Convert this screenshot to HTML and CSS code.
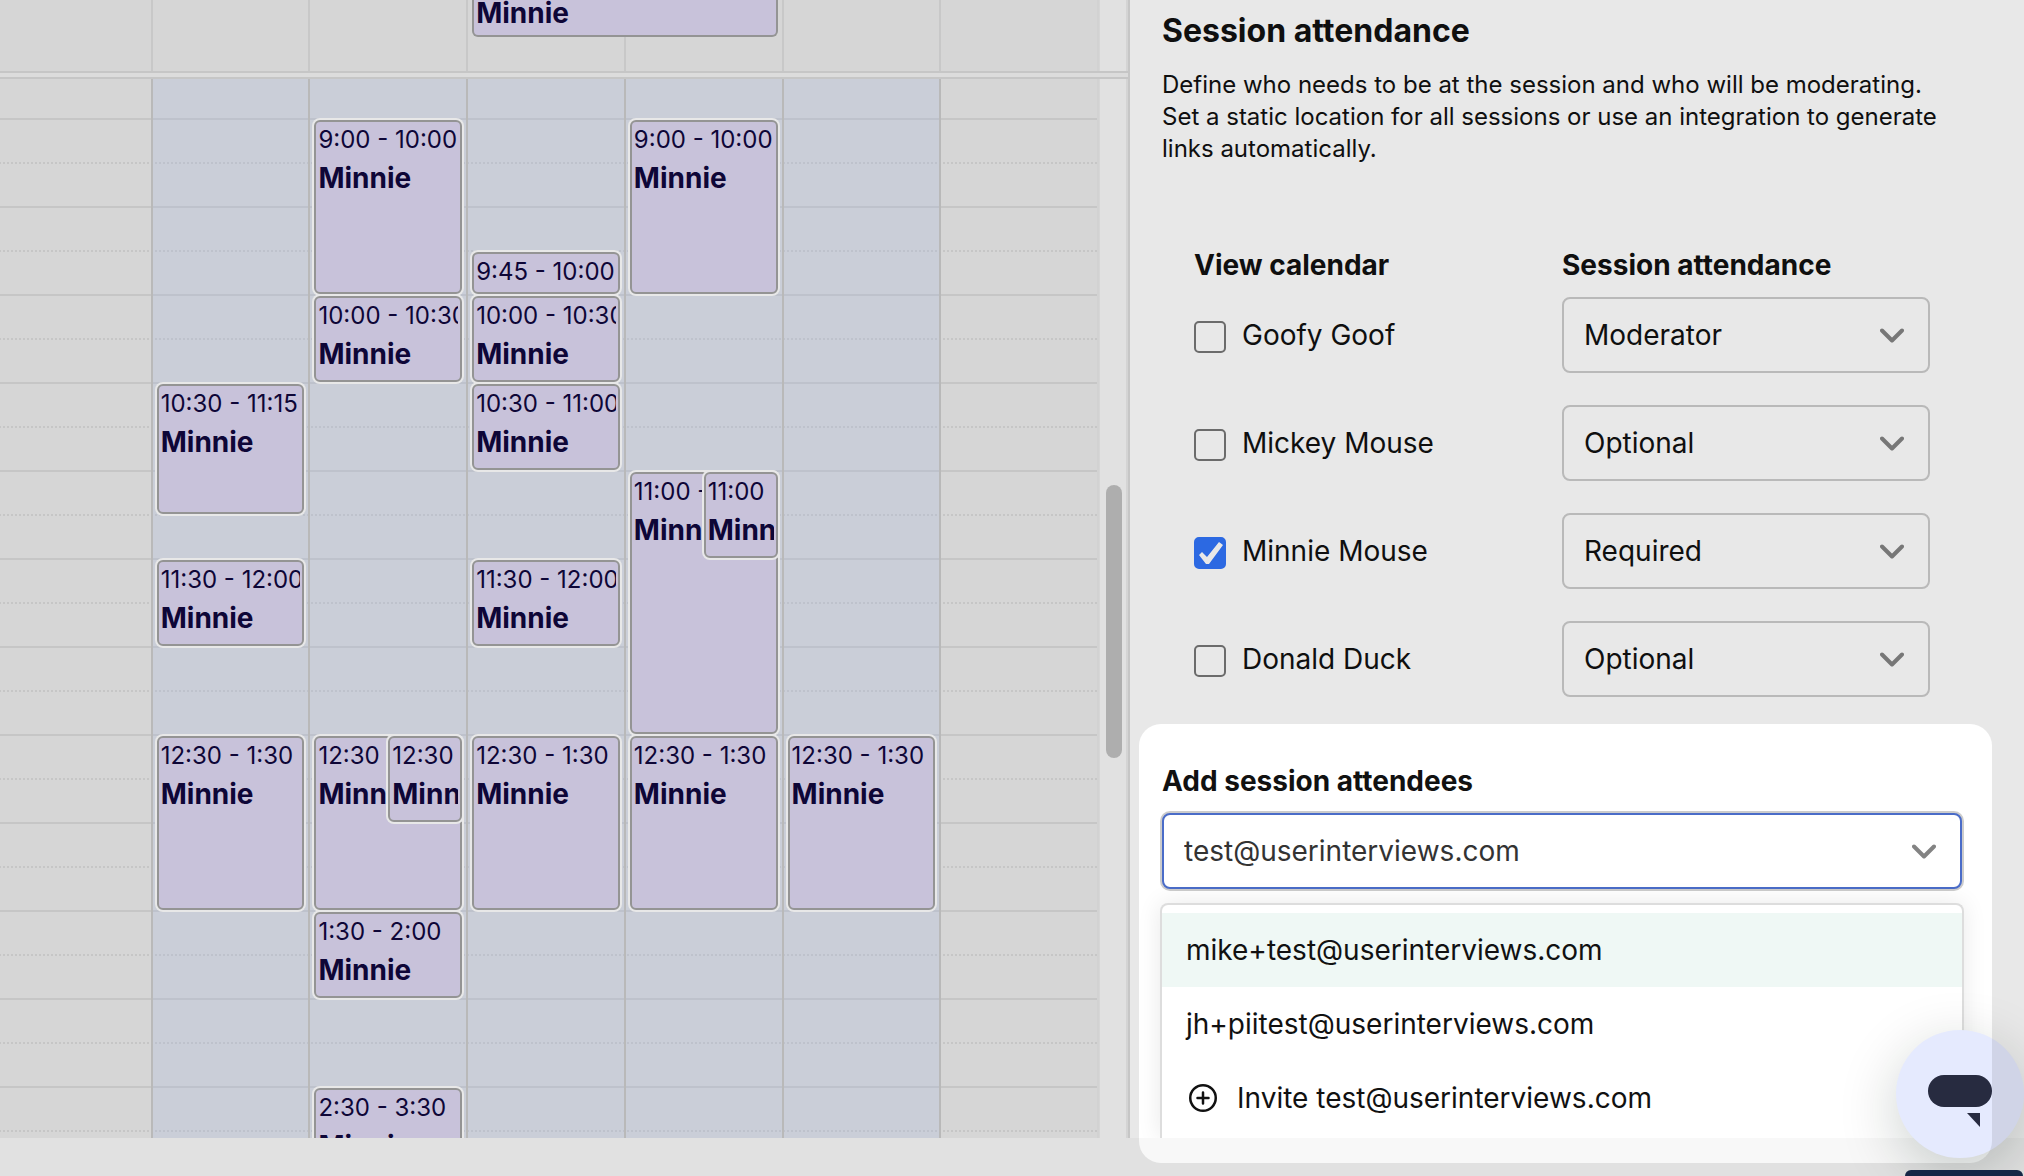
FILE: index.html
```html
<!DOCTYPE html>
<html lang="en">
<head>
    <meta charset="UTF-8">
    <meta name="viewport" content="width=device-width, initial-scale=1.0">
    <title>Session attendance</title>
    <link rel="stylesheet" href="styles.css">
</head>
<body>

    <main class="workspace">

        <!-- Week calendar -->
        <section class="calendar" aria-label="Calendar">
            <div class="all-day">
                <div class="week">
                    <div class="cell"></div>
                    <div class="cell"></div>
                    <div class="cell"></div>
                    <div class="cell"></div>
                    <div class="cell"></div>
                    <div class="cell"></div>
                    <div class="cell"></div>
                    <div class="event-layer">
                        <div class="event event-all-day"><div class="event-title">Minnie</div></div>
                    </div>
                </div>
                <div class="gutter"></div>
            </div>

            <div class="divider"></div>

            <div class="time-scroller">
                <div class="week slots" id="week"></div>
                <div class="gutter"><div class="thumb"></div></div>
            </div>
        </section>

        <!-- Session settings -->
        <section class="panel">
            <h2>Session attendance</h2>
            <p class="intro">Define who needs to be at the session and who will be moderating. Set a static location for all sessions or use an integration to generate links automatically.</p>

            <table class="people">
                <thead>
                    <tr><th>View calendar</th><th>Session attendance</th></tr>
                </thead>
                <tbody>
                    <tr>
                        <td><label class="person"><input type="checkbox">Goofy Goof</label></td>
                        <td>
                            <div class="select">
                                <select aria-label="Attendance for Goofy Goof">
                                    <option selected>Moderator</option><option>Required</option><option>Optional</option>
                                </select>
                                <svg class="chevron" viewBox="0 0 24 16"><path d="M2 2.500l10 10 10-10"/></svg>
                            </div>
                        </td>
                    </tr>
                    <tr>
                        <td><label class="person"><input type="checkbox">Mickey Mouse</label></td>
                        <td>
                            <div class="select">
                                <select aria-label="Attendance for Mickey Mouse">
                                    <option>Moderator</option><option>Required</option><option selected>Optional</option>
                                </select>
                                <svg class="chevron" viewBox="0 0 24 16"><path d="M2 2.500l10 10 10-10"/></svg>
                            </div>
                        </td>
                    </tr>
                    <tr>
                        <td><label class="person"><input type="checkbox" checked>Minnie Mouse</label></td>
                        <td>
                            <div class="select">
                                <select aria-label="Attendance for Minnie Mouse">
                                    <option>Moderator</option><option selected>Required</option><option>Optional</option>
                                </select>
                                <svg class="chevron" viewBox="0 0 24 16"><path d="M2 2.500l10 10 10-10"/></svg>
                            </div>
                        </td>
                    </tr>
                    <tr>
                        <td><label class="person"><input type="checkbox">Donald Duck</label></td>
                        <td>
                            <div class="select">
                                <select aria-label="Attendance for Donald Duck">
                                    <option>Moderator</option><option>Required</option><option selected>Optional</option>
                                </select>
                                <svg class="chevron" viewBox="0 0 24 16"><path d="M2 2.500l10 10 10-10"/></svg>
                            </div>
                        </td>
                    </tr>
                </tbody>
            </table>

            <div class="add-attendees">
                <label class="add-label" for="attendee">Add session attendees</label>
                <div class="combo">
                    <input type="text" id="attendee" value="test@userinterviews.com" autocomplete="off">
                    <svg class="chevron" viewBox="0 0 24 16"><path d="M2 2.500l10 10 10-10"/></svg>
                    <div class="menu">
                        <button type="button" class="active">mike+test@userinterviews.com</button>
                        <button type="button">jh+piitest@userinterviews.com</button>
                        <button type="button">
                            <svg class="plus" viewBox="0 0 28 28"><circle cx="14" cy="14" r="12.750"/><path d="M14 8.500v11M8.500 14h11"/></svg>
                            Invite test@userinterviews.com
                        </button>
                    </div>
                </div>
                <!-- Dims everything outside the highlighted field -->
                <div class="spotlight"></div>
            </div>
        </section>
    </main>

    <footer class="bottom-bar"></footer>

    <!-- Help chat -->
    <button type="button" class="chat" aria-label="Open chat">
        <svg viewBox="0 0 128 128">
            <rect x="32" y="45" width="64" height="32" rx="16"/>
            <path d="M71 83h13v14z"/>
        </svg>
    </button>
    <div class="toast"></div>

    <script>
        // The grid starts at 8:45, one row per 15 minutes
        const gridStart = 8 * 60 + 45;

        const days = [
            { open: false, events: [] },
            { open: true, events: [["10:30", "11:15"], ["11:30", "12:00"], ["12:30", "1:30"]] },
            { open: true, events: [["9:00", "10:00"], ["10:00", "10:30"], ["12:30", "1:30"], ["12:30", "1:00", "half"], ["1:30", "2:00"], ["2:30", "3:30"]] },
            { open: true, events: [["9:45", "10:00"], ["10:00", "10:30"], ["10:30", "11:00"], ["11:30", "12:00"], ["12:30", "1:30"]] },
            { open: true, events: [["9:00", "10:00"], ["11:00", "12:30"], ["11:00", "11:30", "half"], ["12:30", "1:30"]] },
            { open: true, events: [["12:30", "1:30"]] },
            { open: false, events: [] }
        ];

        function rowOf(time) {
            let [hours, minutes] = time.split(":").map(Number);
            if (hours < 8) hours += 12;
            return (hours * 60 + minutes - gridStart) / 15 + 1;
        }

        const week = document.getElementById("week");
        days.forEach(day => {
            const column = document.createElement("div");
            column.className = day.open ? "day open" : "day";
            day.events.forEach(([start, end, size]) => {
                const event = document.createElement("div");
                event.className = size ? "event " + size : "event";
                event.style.gridRow = `${rowOf(start)} / ${rowOf(end)}`;
                // A quarter-hour event only has room for its time
                const title = rowOf(end) - rowOf(start) > 1 ? '<div class="event-title">Minnie</div>' : "";
                event.innerHTML = `<div class="event-time">${start} - ${end}</div>${title}`;
                column.appendChild(event);
            });
            week.appendChild(column);
        });
    </script>
</body>
</html>
```
FILE: styles.css
```css
* {
    box-sizing: border-box;
}

body {
    font-family: Inter, "Liberation Sans", sans-serif;
    font-size: 28px;
    color: #111;
    background: #fff;
    margin: 0;
    height: 100vh;
    display: flex;
    flex-direction: column;
    position: relative;
    overflow: hidden;
}

input, select, button {
    font: inherit;
    color: inherit;
}

.workspace {
    flex: 1;
    min-height: 0;
    display: grid;
    grid-template-columns: minmax(0, 1fr) 894px;
}

/* Calendar */
.calendar {
    min-height: 0;
    display: flex;
    flex-direction: column;
    border-right: 2px solid #dadada;
    background: #ececec;
    overflow: hidden;
}

.all-day,
.time-scroller {
    display: grid;
    grid-template-columns: minmax(0, 1fr) 28px;
}

.time-scroller {
    flex: 1;
    min-height: 0;
    overflow: hidden;
}

.week {
    position: relative;
    display: grid;
    grid-template-columns: repeat(7, minmax(0, 1fr));
    margin: 0 1px 0 -5px;
}

.all-day .week {
    grid-template-rows: 71px;
}

.cell {
    border-right: 2px solid #dcdcdc;
}

.event-layer {
    position: absolute;
    inset: 0;
    display: grid;
    grid-template-columns: repeat(7, minmax(0, 1fr));
}

.divider {
    height: 8px;
    flex-shrink: 0;
    background: #f2f2f2;
    border-top: 2px solid #dadada;
    border-bottom: 2px solid #dadada;
}

.gutter {
    background: #f8f8f8;
    border-right: 2px solid #e9e9e9;
}

.thumb {
    width: 16px;
    height: 273px;
    margin: 406px 4px 0 auto;
    border-radius: 8px;
    background: #c0c0c0;
}

/* Solid line every half hour, dotted line every quarter */
.slots {
    margin-top: -5px;
    align-self: start;
    background-image:
        linear-gradient(transparent 2px, #ececec 2px, #ececec 44px, #dadada 44px, #dadada 46px, #ececec 46px),
        repeating-linear-gradient(90deg, #dadada 0, #dadada 2px, #ececec 2px, #ececec 4px);
    background-size: 100% 88px;
}

.day {
    display: grid;
    grid-template-columns: minmax(0, 1fr);
    grid-template-rows: repeat(25, 44px);
    padding: 0 4px;
    border-right: 2px solid #ccc;
}

.day.open {
    background: rgba(189, 206, 243, 0.3);
}

.day:last-child,
.cell:nth-child(7) {
    border-right-color: #e7e7e7;
}

/* Events */
.event {
    grid-column: 1;
    margin-top: 2px;
    padding: 0 2px;
    border: 2px solid #a3a3a3;
    border-radius: 6px;
    background: #dcd6f0;
    color: #10073d;
    box-shadow: 0 0 0 2px #fff;
    overflow: hidden;
    white-space: nowrap;
}

.event.half {
    margin-left: 50%;
}

.event-all-day {
    grid-column: 4 / 6;
    align-self: start;
    margin: -7px 6px 0 4px;
    padding-bottom: 2px;
    border-top: 0;
    box-shadow: none;
}

.event-time {
    height: 36px;
    font-size: 24px;
    line-height: 36px;
    font-kerning: none;
    overflow: hidden;
}

.half .event-time {
    white-space: normal;
}

.event-title {
    font-weight: 700;
    line-height: 40px;
    overflow: hidden;
}

/* Settings panel */
.panel {
    padding: 11px 62px 0 32px;
}

h2 {
    margin: 0 0 18px;
    font-size: 32px;
    line-height: 40px;
    font-weight: 700;
}

.intro {
    margin: 0;
    font-size: 24px;
    line-height: 32px;
}

.people {
    width: calc(100% - 64px);
    margin: 84px 32px 0;
    table-layout: fixed;
    border-collapse: collapse;
}

.people th {
    padding: 0;
    text-align: left;
    line-height: 32px;
    font-weight: 700;
}

.people td {
    padding: 16px 0;
}

.person {
    display: flex;
    align-items: center;
    gap: 16px;
    line-height: 32px;
}

.person input {
    appearance: none;
    width: 32px;
    height: 32px;
    margin: 4px 0 0;
    border: 2px solid #767676;
    border-radius: 5px;
}

.person input:checked {
    border-color: #3174f9;
    background: #3174f9;
}

.person input:checked::after {
    content: "";
    display: block;
    height: 28px;
    background: #fff;
    clip-path: polygon(3px 16px, 6px 13px, 11px 18px, 23px 3px, 27px 6px, 13px 25px, 10px 25px);
}

.select,
.combo {
    position: relative;
}

.select select {
    appearance: none;
    display: block;
    width: 100%;
    height: 76px;
    padding: 0 64px 0 20px;
    border: 2px solid #ccc;
    border-radius: 8px;
    background: transparent;
}

.chevron {
    position: absolute;
    top: 31px;
    right: 26px;
    width: 24px;
    height: 16px;
    fill: none;
    stroke: #838383;
    stroke-width: 4;
    stroke-linecap: round;
    stroke-linejoin: round;
    pointer-events: none;
}

/* Add attendees */
.add-attendees {
    position: relative;
    margin-top: 11px;
    padding-top: 41px;
}

.add-label {
    display: block;
    margin-bottom: 16px;
    line-height: 32px;
    font-weight: 700;
}

.combo input {
    display: block;
    width: 100%;
    height: 76px;
    padding: 0 64px 0 20px;
    border: 2px solid #4a6cc8;
    border-radius: 8px;
    outline: 0;
    color: #333;
    background: #fff;
    box-shadow: 0 0 0 2px #ccc;
}

.menu {
    position: absolute;
    top: 90px;
    left: -2px;
    right: -2px;
    padding: 8px 0 3px;
    border: 2px solid #ddd;
    border-bottom: 0;
    border-radius: 8px 8px 0 0;
    background: #fff;
    box-shadow: 0 0 24px rgba(0, 0, 0, 0.09);
}

.menu button {
    display: flex;
    align-items: center;
    width: 100%;
    height: 74px;
    padding: 0 24px;
    border: 0;
    background: none;
    text-align: left;
}

.menu button.active {
    background: #eff8f5;
}

.plus {
    width: 28px;
    height: 28px;
    margin: 0 20px 0 3px;
    fill: none;
    stroke: #111;
    stroke-width: 2.5;
    stroke-linecap: round;
}

.spotlight {
    position: absolute;
    z-index: 3;
    top: 0;
    left: -23px;
    right: -30px;
    height: 439px;
    border-radius: 22px;
    box-shadow: 0 0 0 3000px rgba(0, 0, 0, 0.09);
    pointer-events: none;
}

.bottom-bar {
    position: relative;
    z-index: 1;
    height: 38px;
    background: #f8f8f8;
}

/* Chat launcher */
.chat {
    position: absolute;
    z-index: 2;
    right: 0;
    bottom: 18px;
    width: 128px;
    height: 128px;
    padding: 0;
    border: 0;
    border-radius: 50%;
    background: #e5eafe;
    box-shadow: 0 16px 60px rgba(0, 30, 20, 0.2);
}

.chat svg {
    display: block;
    fill: #272b40;
}

.toast {
    position: absolute;
    z-index: 4;
    right: 1px;
    bottom: 0;
    width: 118px;
    height: 6px;
    border-radius: 6px 6px 0 0;
    background: #162746;
}
```
